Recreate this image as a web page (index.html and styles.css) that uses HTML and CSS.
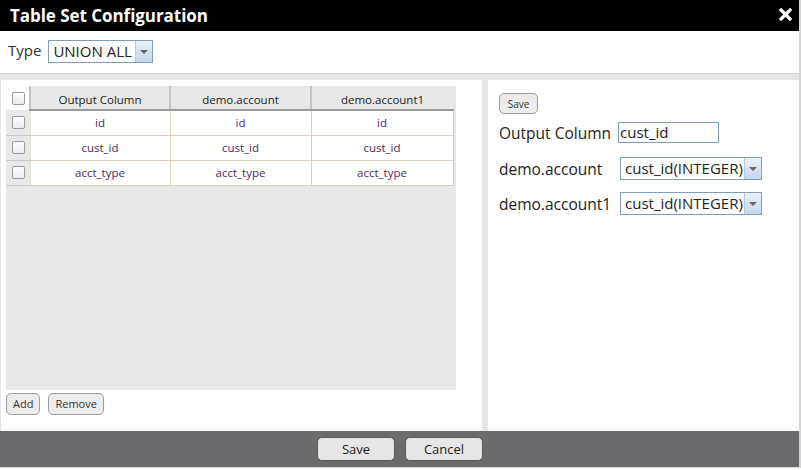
FILE: index.html
```html
<!DOCTYPE html>
<html>
<head>
<meta charset="utf-8">
<link rel="stylesheet" href="styles.css">
</head>
<body>
<div class="dialog">
  <div class="titlebar">
    <span class="title">Table Set Configuration</span>
    <svg class="close" width="13" height="13" viewBox="0 0 13 13"><path d="M2 2 L11 11 M11 2 L2 11" stroke="#fff" stroke-width="3.2" stroke-linecap="square"/></svg>
  </div>
  <div class="typebar">
    <span class="lbl">Type</span>
    <div class="sel type-sel"><span class="sel-text">UNION ALL</span><span class="sel-btn"><i></i></span></div>
  </div>
  <div class="main">
    <div class="left">
      <div class="grid-area">
        <table class="grid">
          <thead>
            <tr><th class="cb-h"><span class="cb"></span></th><th>Output Column</th><th>demo.account</th><th>demo.account1</th></tr>
          </thead>
          <tbody>
            <tr><td class="cb-c"><span class="cb"></span></td><td>id</td><td>id</td><td>id</td></tr>
            <tr><td class="cb-c"><span class="cb"></span></td><td>cust_id</td><td>cust_id</td><td>cust_id</td></tr>
            <tr><td class="cb-c"><span class="cb"></span></td><td>acct_type</td><td>acct_type</td><td>acct_type</td></tr>
          </tbody>
        </table>
      </div>
      <div class="actions">
        <button class="sbtn">Add</button>
        <button class="sbtn">Remove</button>
      </div>
    </div>
    <div class="right">
      <button class="sbtn save-sm">Save</button>
      <div class="frow first"><span class="flbl">Output Column</span><span class="inp">cust_id</span></div>
      <div class="frow r2"><span class="flbl w">demo.account</span><div class="sel col-sel"><span class="sel-text">cust_id(INTEGER)</span><span class="sel-btn"><i></i></span></div></div>
      <div class="frow r3"><span class="flbl w">demo.account1</span><div class="sel col-sel"><span class="sel-text">cust_id(INTEGER)</span><span class="sel-btn"><i></i></span></div></div>
    </div>
  </div>
  <div class="footer">
    <button class="fbtn">Save</button>
    <button class="fbtn">Cancel</button>
  </div>
</div>
</body>
</html>
```
FILE: styles.css
```css
* { box-sizing: border-box; }
html, body { margin: 0; padding: 0; background: #fff; }
body { width: 801px; height: 470px; overflow: hidden; font-family: "Open Sans", "DejaVu Sans", sans-serif; color: #222; }
.dialog { width: 801px; height: 468px; border-right: 2px solid #d4d4d4; border-bottom: 1px solid #d8d8d8; display: flex; flex-direction: column; }
.titlebar { height: 31px; background: #000; display: flex; align-items: center; justify-content: space-between; padding: 0 7px 1px 10px; }
.title { color: #fff; font-weight: 700; font-size: 17px; letter-spacing: -0.05px; }
.close { margin-top: -2px; }
.typebar { height: 43px; border-bottom: 1px solid #d2d2d2; display: flex; align-items: center; padding: 0 0 1px 8px; }
.lbl { font-size: 15px; color: #333; margin-right: 7px; margin-top: -4px; }
.sel { display: flex; border: 1px solid #7f9db9; background: #fff; height: 23px; }
.sel-text { flex: 1; font-size: 15px; line-height: 21px; padding-left: 4px; color: #222; white-space: nowrap; overflow: hidden; }
.sel-btn { width: 17px; border-left: 1px solid #b8c8de; background: linear-gradient(#eaf1fb, #c5d6ee); display: flex; align-items: center; justify-content: center; }
.sel-btn i { width: 0; height: 0; border-left: 4px solid transparent; border-right: 4px solid transparent; border-top: 4px solid #666; }
.type-sel { width: 105px; }
.main { flex: 1; background: #e6e6e6; display: flex; padding: 6px 0 0 1px; gap: 6px; }
.left { width: 481px; background: #fff; padding: 6px 0 0 5px; }
.grid-area { width: 450px; height: 304px; background: #e8e8e8; }
.grid { border-collapse: collapse; table-layout: fixed; width: 447px; font-size: 11.5px; }
.grid th { height: 24px; background: #e8e8e8; font-weight: 400; color: #222; border-left: 2px solid #c4c4c4; border-bottom: 2px solid #9a9a9a; padding: 3px 0 0; text-align: center; }
.grid th:nth-child(2) { width: 140px; }
.grid th:nth-child(3) { width: 141px; }
.grid th:nth-child(4) { width: 142px; }
.grid th.cb-h { width: 24px; background: #fff; border-left: 0; border-bottom: 0; padding: 0; }
.grid td { height: 25px; background: #fff; color: #4b2a5e; text-align: center; border-right: 1px solid #d9cfb3; border-bottom: 1px solid #d9cfb3; border-left: 1px solid #e4e0d4; padding: 0; }
.grid td.cb-c { background: #e8e8e8; border-right: 0; border-left: 0; border-bottom: 1px solid #c8c8c8; }
.cb { display: block; width: 13px; height: 13px; margin: 0 auto 0 6px; border: 1px solid #9a9a9a; border-radius: 2px; background: linear-gradient(#fdfdfd, #ececec); }
.actions { display: flex; gap: 8px; margin-top: 3px; }
.sbtn { display: block; font-family: inherit; font-size: 11px; height: 22px; padding: 0 6px; border: 1px solid #9c9c9c; border-radius: 5px; background: #ececec; color: #333; line-height: 18px; }
.right { flex: 1; background: #fff; padding: 13px 0 0 11px; }
.save-sm { font-size: 10px; height: 21px; width: 39px; padding: 0; }
.frow { display: flex; align-items: center; height: 23px; }
.frow.first { margin-top: 7px; }
.frow.r2 { margin-top: 13px; }
.frow.r3 { margin-top: 12px; }
.flbl { font-size: 15.5px; color: #222; }
.flbl.w { width: 121px; flex: none; }
.inp { margin-left: 7px; width: 101px; height: 21px; border: 1px solid #7f9db9; font-size: 15px; line-height: 19px; padding-left: 1px; }
.col-sel { width: 142px; }
.footer { height: 36px; background: #6b6b6e; display: flex; justify-content: center; align-items: center; gap: 10px; padding-left: 1px; }
.fbtn { font-family: inherit; font-size: 13px; width: 78px; height: 24px; border: 1px solid #5a5a5a; border-radius: 5px; background: #e6e6e6; color: #222; }
```
